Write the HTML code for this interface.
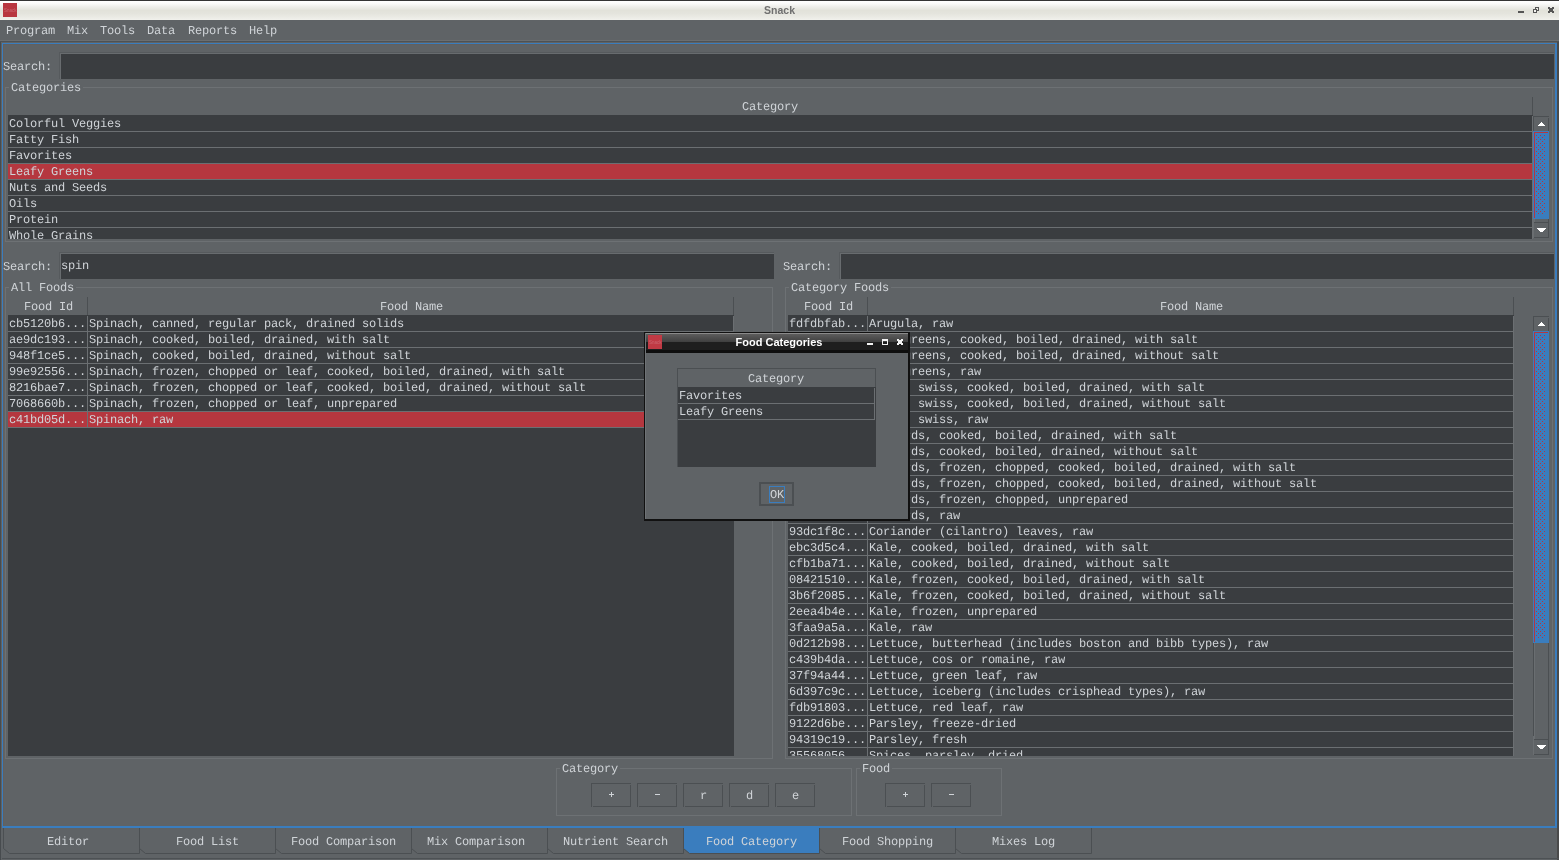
<!DOCTYPE html>
<html><head><meta charset="utf-8"><title>Snack</title>
<style>
html,body{margin:0;padding:0;background:#5f6366;overflow:hidden;}
#r{will-change:transform;position:absolute;left:0;top:0;width:1559px;height:860px;overflow:hidden;background:#5f6366;}
#r div,#r span,#r svg,#r i{position:absolute;display:block;}
.m{font-family:"Liberation Mono",monospace;font-size:12px;letter-spacing:-0.2px;line-height:16px;white-space:pre;text-rendering:geometricPrecision;}
.t{font-family:"Liberation Sans",sans-serif;font-weight:bold;font-size:11px;line-height:14px;white-space:pre;}
.ico{font-family:"Liberation Sans",sans-serif;font-size:4.5px;line-height:6px;color:#cb6670;white-space:pre;}
.clip{overflow:hidden;}
.dots i{width:1px;height:1px;background:#b5373f;}
</style></head>
<body><div id="r">
<div style="left:0;top:0;width:1559px;height:860px;background:#5f6366"></div>
<div style="left:0px;top:0px;width:1559px;height:1px;background:#343434;"></div>
<div style="left:0px;top:1px;width:1559px;height:19px;background:;background:linear-gradient(#ffffff 0%,#fbfbfa 12%,#eeeeea 30%,#e2e2da 50%,#e4e4dd 65%,#ebebe5 85%,#f1f1ec 100%)"></div>
<div style="left:3px;top:3px;width:14px;height:14px;background:#b8363f;"></div>
<span class="ico" style="left:4px;top:8px;">Snack</span>
<span class="t" style="left:0;top:3px;width:1559px;text-align:center;color:#707070;font-size:10.5px">Snack</span>
<div style="left:1518px;top:11px;width:6px;height:2px;background:#555555;"></div>
<div style="left:1535px;top:7px;width:4px;height:1px;background:#555555;"></div>
<div style="left:1538px;top:7px;width:1px;height:4px;background:#555555;"></div>
<div style="left:1535px;top:7px;width:1px;height:2px;background:#555555;"></div>
<div style="left:1537px;top:10px;width:2px;height:1px;background:#555555;"></div>
<div style="left:1533px;top:9px;width:4px;height:4px;background:#555555;"></div>
<div style="left:1534px;top:10px;width:2px;height:2px;background:#f4f4f0;"></div>
<svg style="left:1548px;top:7px" width="6" height="6" viewBox="0 0 6 6"><path d="M0 0h2v1h2V0h2v2H5v2h1v2H4V5H2v1H0V4h1V2H0z" fill="#555555"/></svg>
<div style="left:0px;top:20px;width:1559px;height:22px;background:#5f6366;"></div>
<div style="left:0px;top:40px;width:1559px;height:1px;background:#6a6e71;"></div>
<div style="left:0px;top:41px;width:1559px;height:1px;background:#4d5154;"></div>
<span class="m" style="left:6px;top:23px;color:#d0d4d8;">Program</span>
<span class="m" style="left:67px;top:23px;color:#d0d4d8;">Mix</span>
<span class="m" style="left:100px;top:23px;color:#d0d4d8;">Tools</span>
<span class="m" style="left:147px;top:23px;color:#d0d4d8;">Data</span>
<span class="m" style="left:188px;top:23px;color:#d0d4d8;">Reports</span>
<span class="m" style="left:249px;top:23px;color:#d0d4d8;">Help</span>
<div style="left:0px;top:42px;width:1px;height:818px;background:#474b4e;"></div>
<div style="left:1557px;top:42px;width:1px;height:818px;background:#4a4a4a;"></div>
<div style="left:1558px;top:42px;width:1px;height:818px;background:#4a4a4a;"></div>
<div style="left:2px;top:43px;width:1555px;height:1px;background:#3a7dbe;"></div>
<div style="left:2px;top:43px;width:1px;height:785px;background:#3a7dbe;"></div>
<div style="left:1555px;top:43px;width:2px;height:785px;background:#3a7dbe;"></div>
<div style="left:2px;top:826px;width:1555px;height:2px;background:#3a7dbe;"></div>
<div style="left:3px;top:44px;width:1px;height:782px;background:#62605f;"></div>
<div style="left:3px;top:44px;width:1552px;height:1px;background:#62605f;"></div>
<span class="m" style="left:3px;top:59px;color:#d0d4d8;">Search:</span>
<div style="left:59px;top:52px;width:1495px;height:27px;background:#565a5d;"></div>
<div style="left:60px;top:53px;width:1494px;height:26px;background:#686c6f;"></div>
<div style="left:61px;top:54px;width:1493px;height:25px;background:#3a3d40;"></div>
<div style="left:5px;top:87px;width:4px;height:1px;background:#6d7174;"></div>
<div style="left:83px;top:87px;width:1470px;height:1px;background:#6d7174;"></div>
<div style="left:5px;top:87px;width:1px;height:155px;background:#6d7174;"></div>
<div style="left:1552px;top:87px;width:1px;height:155px;background:#6d7174;"></div>
<div style="left:5px;top:241px;width:1548px;height:1px;background:#6d7174;"></div>
<span class="m" style="left:11px;top:80px;color:#d0d4d8;">Categories</span>
<div style="left:1532px;top:97px;width:1px;height:19px;background:#4b4f52;"></div>
<span class="m" style="left:742px;top:99px;color:#d0d4d8;">Category</span>
<div class="clip" style="left:8px;top:115px;width:1526px;height:124px;">
<div style="left:0;top:0;width:1525px;height:124px;background:#3a3d40"></div>
<div style="left:0;top:16px;width:1525px;height:1px;background:#6b6f72"></div>
<span class="m" style="left:1px;top:1px;color:#d0d4d8">Colorful Veggies</span>
<div style="left:0;top:32px;width:1525px;height:1px;background:#6b6f72"></div>
<span class="m" style="left:1px;top:17px;color:#d0d4d8">Fatty Fish</span>
<div style="left:0;top:48px;width:1525px;height:1px;background:#6b6f72"></div>
<span class="m" style="left:1px;top:33px;color:#d0d4d8">Favorites</span>
<div style="left:0;top:49px;width:1525px;height:15px;background:#b5373f"></div>
<div style="left:0;top:64px;width:1525px;height:1px;background:#6b6f72"></div>
<span class="m" style="left:1px;top:49px;color:#d0d4d8">Leafy Greens</span>
<div style="left:0;top:80px;width:1525px;height:1px;background:#6b6f72"></div>
<span class="m" style="left:1px;top:65px;color:#d0d4d8">Nuts and Seeds</span>
<div style="left:0;top:96px;width:1525px;height:1px;background:#6b6f72"></div>
<span class="m" style="left:1px;top:81px;color:#d0d4d8">Oils</span>
<div style="left:0;top:112px;width:1525px;height:1px;background:#6b6f72"></div>
<span class="m" style="left:1px;top:97px;color:#d0d4d8">Protein</span>
<div style="left:0;top:128px;width:1525px;height:1px;background:#6b6f72"></div>
<span class="m" style="left:1px;top:113px;color:#d0d4d8">Whole Grains</span>
<div style="left:1524px;top:1px;width:1px;height:124px;background:#6b6f72"></div>
</div>
<div style="left:1533px;top:116px;width:1px;height:122px;background:#4b4f52;"></div>
<div style="left:1534px;top:116px;width:1px;height:122px;background:#6a6e71;"></div>
<div style="left:1548px;top:116px;width:1px;height:122px;background:#4b4f52;"></div>
<div style="left:1533px;top:116px;width:16px;height:16px;background:#5f6366;"></div>
<div style="left:1533px;top:116px;width:16px;height:1px;background:#4b4f52;"></div>
<div style="left:1533px;top:116px;width:1px;height:15px;background:#4b4f52;"></div>
<div style="left:1548px;top:118px;width:1px;height:13px;background:#4b4f52;"></div>
<div style="left:1541px;top:122px;width:1px;height:1px;background:#ffffff;"></div>
<div style="left:1540px;top:123px;width:3px;height:1px;background:#ffffff;"></div>
<div style="left:1539px;top:124px;width:5px;height:1px;background:#ffffff;"></div>
<div style="left:1538px;top:125px;width:7px;height:1px;background:#ffffff;"></div>
<div style="left:1533px;top:131px;width:16px;height:88px;background:#3a7dbe;"></div>
<div style="left:1534px;top:132px;width:1px;height:86px;background:#b5373f;"></div>
<div style="left:1534px;top:132px;width:14px;height:1px;background:#b5373f;"></div>
<div class="dots"><i style="left:1536px;top:135px"></i><i style="left:1540px;top:135px"></i><i style="left:1544px;top:135px"></i><i style="left:1538px;top:137px"></i><i style="left:1542px;top:137px"></i><i style="left:1536px;top:139px"></i><i style="left:1540px;top:139px"></i><i style="left:1544px;top:139px"></i><i style="left:1538px;top:141px"></i><i style="left:1542px;top:141px"></i><i style="left:1536px;top:143px"></i><i style="left:1540px;top:143px"></i><i style="left:1544px;top:143px"></i><i style="left:1538px;top:145px"></i><i style="left:1542px;top:145px"></i><i style="left:1536px;top:147px"></i><i style="left:1540px;top:147px"></i><i style="left:1544px;top:147px"></i><i style="left:1538px;top:149px"></i><i style="left:1542px;top:149px"></i><i style="left:1536px;top:151px"></i><i style="left:1540px;top:151px"></i><i style="left:1544px;top:151px"></i><i style="left:1538px;top:153px"></i><i style="left:1542px;top:153px"></i><i style="left:1536px;top:155px"></i><i style="left:1540px;top:155px"></i><i style="left:1544px;top:155px"></i><i style="left:1538px;top:157px"></i><i style="left:1542px;top:157px"></i><i style="left:1536px;top:159px"></i><i style="left:1540px;top:159px"></i><i style="left:1544px;top:159px"></i><i style="left:1538px;top:161px"></i><i style="left:1542px;top:161px"></i><i style="left:1536px;top:163px"></i><i style="left:1540px;top:163px"></i><i style="left:1544px;top:163px"></i><i style="left:1538px;top:165px"></i><i style="left:1542px;top:165px"></i><i style="left:1536px;top:167px"></i><i style="left:1540px;top:167px"></i><i style="left:1544px;top:167px"></i><i style="left:1538px;top:169px"></i><i style="left:1542px;top:169px"></i><i style="left:1536px;top:171px"></i><i style="left:1540px;top:171px"></i><i style="left:1544px;top:171px"></i><i style="left:1538px;top:173px"></i><i style="left:1542px;top:173px"></i><i style="left:1536px;top:175px"></i><i style="left:1540px;top:175px"></i><i style="left:1544px;top:175px"></i><i style="left:1538px;top:177px"></i><i style="left:1542px;top:177px"></i><i style="left:1536px;top:179px"></i><i style="left:1540px;top:179px"></i><i style="left:1544px;top:179px"></i><i style="left:1538px;top:181px"></i><i style="left:1542px;top:181px"></i><i style="left:1536px;top:183px"></i><i style="left:1540px;top:183px"></i><i style="left:1544px;top:183px"></i><i style="left:1538px;top:185px"></i><i style="left:1542px;top:185px"></i><i style="left:1536px;top:187px"></i><i style="left:1540px;top:187px"></i><i style="left:1544px;top:187px"></i><i style="left:1538px;top:189px"></i><i style="left:1542px;top:189px"></i><i style="left:1536px;top:191px"></i><i style="left:1540px;top:191px"></i><i style="left:1544px;top:191px"></i><i style="left:1538px;top:193px"></i><i style="left:1542px;top:193px"></i><i style="left:1536px;top:195px"></i><i style="left:1540px;top:195px"></i><i style="left:1544px;top:195px"></i><i style="left:1538px;top:197px"></i><i style="left:1542px;top:197px"></i><i style="left:1536px;top:199px"></i><i style="left:1540px;top:199px"></i><i style="left:1544px;top:199px"></i><i style="left:1538px;top:201px"></i><i style="left:1542px;top:201px"></i><i style="left:1536px;top:203px"></i><i style="left:1540px;top:203px"></i><i style="left:1544px;top:203px"></i><i style="left:1538px;top:205px"></i><i style="left:1542px;top:205px"></i><i style="left:1536px;top:207px"></i><i style="left:1540px;top:207px"></i><i style="left:1544px;top:207px"></i><i style="left:1538px;top:209px"></i><i style="left:1542px;top:209px"></i><i style="left:1536px;top:211px"></i><i style="left:1540px;top:211px"></i><i style="left:1544px;top:211px"></i><i style="left:1538px;top:213px"></i><i style="left:1542px;top:213px"></i></div>
<div style="left:1533px;top:222px;width:16px;height:16px;background:#5f6366;"></div>
<div style="left:1534px;top:222px;width:15px;height:1px;background:#4b4f52;"></div>
<div style="left:1534px;top:237px;width:15px;height:1px;background:#4b4f52;"></div>
<div style="left:1548px;top:222px;width:1px;height:16px;background:#4b4f52;"></div>
<div style="left:1533px;top:219px;width:1px;height:19px;background:#6a6e71;"></div>
<div style="left:1537px;top:228px;width:9px;height:1px;background:#ffffff;"></div>
<div style="left:1538px;top:229px;width:7px;height:1px;background:#ffffff;"></div>
<div style="left:1539px;top:230px;width:5px;height:1px;background:#ffffff;"></div>
<div style="left:1540px;top:231px;width:3px;height:1px;background:#ffffff;"></div>
<span class="m" style="left:3px;top:259px;color:#d0d4d8;">Search:</span>
<div style="left:59px;top:252px;width:715px;height:27px;background:#565a5d;"></div>
<div style="left:60px;top:253px;width:714px;height:26px;background:#686c6f;"></div>
<div style="left:61px;top:254px;width:713px;height:25px;background:#3a3d40;"></div>
<span class="m" style="left:61px;top:258px;color:#d0d4d8;">spin</span>
<div style="left:5px;top:287px;width:4px;height:1px;background:#6d7174;"></div>
<div style="left:76px;top:287px;width:697px;height:1px;background:#6d7174;"></div>
<div style="left:5px;top:287px;width:1px;height:472px;background:#6d7174;"></div>
<div style="left:772px;top:287px;width:1px;height:472px;background:#6d7174;"></div>
<div style="left:5px;top:758px;width:768px;height:1px;background:#6d7174;"></div>
<span class="m" style="left:11px;top:280px;color:#d0d4d8;">All Foods</span>
<div style="left:87px;top:297px;width:1px;height:19px;background:#4b4f52;"></div>
<span class="m" style="left:24px;top:299px;color:#d0d4d8;">Food Id</span>
<div style="left:733px;top:297px;width:1px;height:19px;background:#4b4f52;"></div>
<span class="m" style="left:380px;top:299px;color:#d0d4d8;">Food Name</span>
<div class="clip" style="left:8px;top:315px;width:727px;height:441px;">
<div style="left:0;top:0;width:726px;height:441px;background:#3a3d40"></div>
<div style="left:0;top:16px;width:726px;height:1px;background:#6b6f72"></div>
<span class="m" style="left:1px;top:1px;color:#d0d4d8">cb5120b6...</span>
<span class="m" style="left:81px;top:1px;color:#d0d4d8">Spinach, canned, regular pack, drained solids</span>
<div style="left:0;top:32px;width:726px;height:1px;background:#6b6f72"></div>
<span class="m" style="left:1px;top:17px;color:#d0d4d8">ae9dc193...</span>
<span class="m" style="left:81px;top:17px;color:#d0d4d8">Spinach, cooked, boiled, drained, with salt</span>
<div style="left:0;top:48px;width:726px;height:1px;background:#6b6f72"></div>
<span class="m" style="left:1px;top:33px;color:#d0d4d8">948f1ce5...</span>
<span class="m" style="left:81px;top:33px;color:#d0d4d8">Spinach, cooked, boiled, drained, without salt</span>
<div style="left:0;top:64px;width:726px;height:1px;background:#6b6f72"></div>
<span class="m" style="left:1px;top:49px;color:#d0d4d8">99e92556...</span>
<span class="m" style="left:81px;top:49px;color:#d0d4d8">Spinach, frozen, chopped or leaf, cooked, boiled, drained, with salt</span>
<div style="left:0;top:80px;width:726px;height:1px;background:#6b6f72"></div>
<span class="m" style="left:1px;top:65px;color:#d0d4d8">8216bae7...</span>
<span class="m" style="left:81px;top:65px;color:#d0d4d8">Spinach, frozen, chopped or leaf, cooked, boiled, drained, without salt</span>
<div style="left:0;top:96px;width:726px;height:1px;background:#6b6f72"></div>
<span class="m" style="left:1px;top:81px;color:#d0d4d8">7068660b...</span>
<span class="m" style="left:81px;top:81px;color:#d0d4d8">Spinach, frozen, chopped or leaf, unprepared</span>
<div style="left:0;top:97px;width:726px;height:15px;background:#b5373f"></div>
<div style="left:0;top:112px;width:726px;height:1px;background:#6b6f72"></div>
<span class="m" style="left:1px;top:97px;color:#d0d4d8">c41bd05d...</span>
<span class="m" style="left:81px;top:97px;color:#d0d4d8">Spinach, raw</span>
<div style="left:79px;top:1px;width:1px;height:112px;background:#6b6f72"></div>
<div style="left:725px;top:1px;width:1px;height:112px;background:#6b6f72"></div>
</div>
<span class="m" style="left:783px;top:259px;color:#d0d4d8;">Search:</span>
<div style="left:839px;top:252px;width:715px;height:27px;background:#565a5d;"></div>
<div style="left:840px;top:253px;width:714px;height:26px;background:#686c6f;"></div>
<div style="left:841px;top:254px;width:713px;height:25px;background:#3a3d40;"></div>
<div style="left:785px;top:287px;width:4px;height:1px;background:#6d7174;"></div>
<div style="left:891px;top:287px;width:662px;height:1px;background:#6d7174;"></div>
<div style="left:785px;top:287px;width:1px;height:472px;background:#6d7174;"></div>
<div style="left:1552px;top:287px;width:1px;height:472px;background:#6d7174;"></div>
<div style="left:785px;top:758px;width:768px;height:1px;background:#6d7174;"></div>
<span class="m" style="left:791px;top:280px;color:#d0d4d8;">Category Foods</span>
<div style="left:867px;top:297px;width:1px;height:19px;background:#4b4f52;"></div>
<span class="m" style="left:804px;top:299px;color:#d0d4d8;">Food Id</span>
<div style="left:1513px;top:297px;width:1px;height:19px;background:#4b4f52;"></div>
<span class="m" style="left:1160px;top:299px;color:#d0d4d8;">Food Name</span>
<div class="clip" style="left:788px;top:315px;width:727px;height:441px;">
<div style="left:0;top:0;width:726px;height:441px;background:#3a3d40"></div>
<div style="left:0;top:16px;width:726px;height:1px;background:#6b6f72"></div>
<span class="m" style="left:1px;top:1px;color:#d0d4d8">fdfdbfab...</span>
<span class="m" style="left:81px;top:1px;color:#d0d4d8">Arugula, raw</span>
<div style="left:0;top:32px;width:726px;height:1px;background:#6b6f72"></div>
<span class="m" style="left:1px;top:17px;color:#d0d4d8">1b5e7d02...</span>
<span class="m" style="left:81px;top:17px;color:#d0d4d8">Beet greens, cooked, boiled, drained, with salt</span>
<div style="left:0;top:48px;width:726px;height:1px;background:#6b6f72"></div>
<span class="m" style="left:1px;top:33px;color:#d0d4d8">a90c44e1...</span>
<span class="m" style="left:81px;top:33px;color:#d0d4d8">Beet greens, cooked, boiled, drained, without salt</span>
<div style="left:0;top:64px;width:726px;height:1px;background:#6b6f72"></div>
<span class="m" style="left:1px;top:49px;color:#d0d4d8">5c2f81b7...</span>
<span class="m" style="left:81px;top:49px;color:#d0d4d8">Beet greens, raw</span>
<div style="left:0;top:80px;width:726px;height:1px;background:#6b6f72"></div>
<span class="m" style="left:1px;top:65px;color:#d0d4d8">e07a3d96...</span>
<span class="m" style="left:81px;top:65px;color:#d0d4d8">Chard, swiss, cooked, boiled, drained, with salt</span>
<div style="left:0;top:96px;width:726px;height:1px;background:#6b6f72"></div>
<span class="m" style="left:1px;top:81px;color:#d0d4d8">4d81c6f3...</span>
<span class="m" style="left:81px;top:81px;color:#d0d4d8">Chard, swiss, cooked, boiled, drained, without salt</span>
<div style="left:0;top:112px;width:726px;height:1px;background:#6b6f72"></div>
<span class="m" style="left:1px;top:97px;color:#d0d4d8">b3f05a28...</span>
<span class="m" style="left:81px;top:97px;color:#d0d4d8">Chard, swiss, raw</span>
<div style="left:0;top:128px;width:726px;height:1px;background:#6b6f72"></div>
<span class="m" style="left:1px;top:113px;color:#d0d4d8">27c9e4d1...</span>
<span class="m" style="left:81px;top:113px;color:#d0d4d8">Collards, cooked, boiled, drained, with salt</span>
<div style="left:0;top:144px;width:726px;height:1px;background:#6b6f72"></div>
<span class="m" style="left:1px;top:129px;color:#d0d4d8">8a16f0b5...</span>
<span class="m" style="left:81px;top:129px;color:#d0d4d8">Collards, cooked, boiled, drained, without salt</span>
<div style="left:0;top:160px;width:726px;height:1px;background:#6b6f72"></div>
<span class="m" style="left:1px;top:145px;color:#d0d4d8">d4b27e39...</span>
<span class="m" style="left:81px;top:145px;color:#d0d4d8">Collards, frozen, chopped, cooked, boiled, drained, with salt</span>
<div style="left:0;top:176px;width:726px;height:1px;background:#6b6f72"></div>
<span class="m" style="left:1px;top:161px;color:#d0d4d8">61e8a5c0...</span>
<span class="m" style="left:81px;top:161px;color:#d0d4d8">Collards, frozen, chopped, cooked, boiled, drained, without salt</span>
<div style="left:0;top:192px;width:726px;height:1px;background:#6b6f72"></div>
<span class="m" style="left:1px;top:177px;color:#d0d4d8">f92d03b4...</span>
<span class="m" style="left:81px;top:177px;color:#d0d4d8">Collards, frozen, chopped, unprepared</span>
<div style="left:0;top:208px;width:726px;height:1px;background:#6b6f72"></div>
<span class="m" style="left:1px;top:193px;color:#d0d4d8">0c75b1e8...</span>
<span class="m" style="left:81px;top:193px;color:#d0d4d8">Collards, raw</span>
<div style="left:0;top:224px;width:726px;height:1px;background:#6b6f72"></div>
<span class="m" style="left:1px;top:209px;color:#d0d4d8">93dc1f8c...</span>
<span class="m" style="left:81px;top:209px;color:#d0d4d8">Coriander (cilantro) leaves, raw</span>
<div style="left:0;top:240px;width:726px;height:1px;background:#6b6f72"></div>
<span class="m" style="left:1px;top:225px;color:#d0d4d8">ebc3d5c4...</span>
<span class="m" style="left:81px;top:225px;color:#d0d4d8">Kale, cooked, boiled, drained, with salt</span>
<div style="left:0;top:256px;width:726px;height:1px;background:#6b6f72"></div>
<span class="m" style="left:1px;top:241px;color:#d0d4d8">cfb1ba71...</span>
<span class="m" style="left:81px;top:241px;color:#d0d4d8">Kale, cooked, boiled, drained, without salt</span>
<div style="left:0;top:272px;width:726px;height:1px;background:#6b6f72"></div>
<span class="m" style="left:1px;top:257px;color:#d0d4d8">08421510...</span>
<span class="m" style="left:81px;top:257px;color:#d0d4d8">Kale, frozen, cooked, boiled, drained, with salt</span>
<div style="left:0;top:288px;width:726px;height:1px;background:#6b6f72"></div>
<span class="m" style="left:1px;top:273px;color:#d0d4d8">3b6f2085...</span>
<span class="m" style="left:81px;top:273px;color:#d0d4d8">Kale, frozen, cooked, boiled, drained, without salt</span>
<div style="left:0;top:304px;width:726px;height:1px;background:#6b6f72"></div>
<span class="m" style="left:1px;top:289px;color:#d0d4d8">2eea4b4e...</span>
<span class="m" style="left:81px;top:289px;color:#d0d4d8">Kale, frozen, unprepared</span>
<div style="left:0;top:320px;width:726px;height:1px;background:#6b6f72"></div>
<span class="m" style="left:1px;top:305px;color:#d0d4d8">3faa9a5a...</span>
<span class="m" style="left:81px;top:305px;color:#d0d4d8">Kale, raw</span>
<div style="left:0;top:336px;width:726px;height:1px;background:#6b6f72"></div>
<span class="m" style="left:1px;top:321px;color:#d0d4d8">0d212b98...</span>
<span class="m" style="left:81px;top:321px;color:#d0d4d8">Lettuce, butterhead (includes boston and bibb types), raw</span>
<div style="left:0;top:352px;width:726px;height:1px;background:#6b6f72"></div>
<span class="m" style="left:1px;top:337px;color:#d0d4d8">c439b4da...</span>
<span class="m" style="left:81px;top:337px;color:#d0d4d8">Lettuce, cos or romaine, raw</span>
<div style="left:0;top:368px;width:726px;height:1px;background:#6b6f72"></div>
<span class="m" style="left:1px;top:353px;color:#d0d4d8">37f94a44...</span>
<span class="m" style="left:81px;top:353px;color:#d0d4d8">Lettuce, green leaf, raw</span>
<div style="left:0;top:384px;width:726px;height:1px;background:#6b6f72"></div>
<span class="m" style="left:1px;top:369px;color:#d0d4d8">6d397c9c...</span>
<span class="m" style="left:81px;top:369px;color:#d0d4d8">Lettuce, iceberg (includes crisphead types), raw</span>
<div style="left:0;top:400px;width:726px;height:1px;background:#6b6f72"></div>
<span class="m" style="left:1px;top:385px;color:#d0d4d8">fdb91803...</span>
<span class="m" style="left:81px;top:385px;color:#d0d4d8">Lettuce, red leaf, raw</span>
<div style="left:0;top:416px;width:726px;height:1px;background:#6b6f72"></div>
<span class="m" style="left:1px;top:401px;color:#d0d4d8">9122d6be...</span>
<span class="m" style="left:81px;top:401px;color:#d0d4d8">Parsley, freeze-dried</span>
<div style="left:0;top:432px;width:726px;height:1px;background:#6b6f72"></div>
<span class="m" style="left:1px;top:417px;color:#d0d4d8">94319c19...</span>
<span class="m" style="left:81px;top:417px;color:#d0d4d8">Parsley, fresh</span>
<div style="left:0;top:448px;width:726px;height:1px;background:#6b6f72"></div>
<span class="m" style="left:1px;top:433px;color:#d0d4d8">35568056...</span>
<span class="m" style="left:81px;top:433px;color:#d0d4d8">Spices, parsley, dried</span>
<div style="left:79px;top:1px;width:1px;height:441px;background:#6b6f72"></div>
<div style="left:725px;top:1px;width:1px;height:441px;background:#6b6f72"></div>
</div>
<div style="left:1533px;top:316px;width:1px;height:439px;background:#4b4f52;"></div>
<div style="left:1534px;top:316px;width:1px;height:439px;background:#6a6e71;"></div>
<div style="left:1548px;top:316px;width:1px;height:439px;background:#4b4f52;"></div>
<div style="left:1533px;top:316px;width:16px;height:16px;background:#5f6366;"></div>
<div style="left:1533px;top:316px;width:16px;height:1px;background:#4b4f52;"></div>
<div style="left:1533px;top:316px;width:1px;height:15px;background:#4b4f52;"></div>
<div style="left:1548px;top:318px;width:1px;height:13px;background:#4b4f52;"></div>
<div style="left:1541px;top:322px;width:1px;height:1px;background:#ffffff;"></div>
<div style="left:1540px;top:323px;width:3px;height:1px;background:#ffffff;"></div>
<div style="left:1539px;top:324px;width:5px;height:1px;background:#ffffff;"></div>
<div style="left:1538px;top:325px;width:7px;height:1px;background:#ffffff;"></div>
<div style="left:1533px;top:331px;width:16px;height:312px;background:#3a7dbe;"></div>
<div style="left:1534px;top:332px;width:1px;height:310px;background:#b5373f;"></div>
<div style="left:1534px;top:332px;width:14px;height:1px;background:#b5373f;"></div>
<div class="dots"><i style="left:1536px;top:335px"></i><i style="left:1540px;top:335px"></i><i style="left:1544px;top:335px"></i><i style="left:1538px;top:337px"></i><i style="left:1542px;top:337px"></i><i style="left:1536px;top:339px"></i><i style="left:1540px;top:339px"></i><i style="left:1544px;top:339px"></i><i style="left:1538px;top:341px"></i><i style="left:1542px;top:341px"></i><i style="left:1536px;top:343px"></i><i style="left:1540px;top:343px"></i><i style="left:1544px;top:343px"></i><i style="left:1538px;top:345px"></i><i style="left:1542px;top:345px"></i><i style="left:1536px;top:347px"></i><i style="left:1540px;top:347px"></i><i style="left:1544px;top:347px"></i><i style="left:1538px;top:349px"></i><i style="left:1542px;top:349px"></i><i style="left:1536px;top:351px"></i><i style="left:1540px;top:351px"></i><i style="left:1544px;top:351px"></i><i style="left:1538px;top:353px"></i><i style="left:1542px;top:353px"></i><i style="left:1536px;top:355px"></i><i style="left:1540px;top:355px"></i><i style="left:1544px;top:355px"></i><i style="left:1538px;top:357px"></i><i style="left:1542px;top:357px"></i><i style="left:1536px;top:359px"></i><i style="left:1540px;top:359px"></i><i style="left:1544px;top:359px"></i><i style="left:1538px;top:361px"></i><i style="left:1542px;top:361px"></i><i style="left:1536px;top:363px"></i><i style="left:1540px;top:363px"></i><i style="left:1544px;top:363px"></i><i style="left:1538px;top:365px"></i><i style="left:1542px;top:365px"></i><i style="left:1536px;top:367px"></i><i style="left:1540px;top:367px"></i><i style="left:1544px;top:367px"></i><i style="left:1538px;top:369px"></i><i style="left:1542px;top:369px"></i><i style="left:1536px;top:371px"></i><i style="left:1540px;top:371px"></i><i style="left:1544px;top:371px"></i><i style="left:1538px;top:373px"></i><i style="left:1542px;top:373px"></i><i style="left:1536px;top:375px"></i><i style="left:1540px;top:375px"></i><i style="left:1544px;top:375px"></i><i style="left:1538px;top:377px"></i><i style="left:1542px;top:377px"></i><i style="left:1536px;top:379px"></i><i style="left:1540px;top:379px"></i><i style="left:1544px;top:379px"></i><i style="left:1538px;top:381px"></i><i style="left:1542px;top:381px"></i><i style="left:1536px;top:383px"></i><i style="left:1540px;top:383px"></i><i style="left:1544px;top:383px"></i><i style="left:1538px;top:385px"></i><i style="left:1542px;top:385px"></i><i style="left:1536px;top:387px"></i><i style="left:1540px;top:387px"></i><i style="left:1544px;top:387px"></i><i style="left:1538px;top:389px"></i><i style="left:1542px;top:389px"></i><i style="left:1536px;top:391px"></i><i style="left:1540px;top:391px"></i><i style="left:1544px;top:391px"></i><i style="left:1538px;top:393px"></i><i style="left:1542px;top:393px"></i><i style="left:1536px;top:395px"></i><i style="left:1540px;top:395px"></i><i style="left:1544px;top:395px"></i><i style="left:1538px;top:397px"></i><i style="left:1542px;top:397px"></i><i style="left:1536px;top:399px"></i><i style="left:1540px;top:399px"></i><i style="left:1544px;top:399px"></i><i style="left:1538px;top:401px"></i><i style="left:1542px;top:401px"></i><i style="left:1536px;top:403px"></i><i style="left:1540px;top:403px"></i><i style="left:1544px;top:403px"></i><i style="left:1538px;top:405px"></i><i style="left:1542px;top:405px"></i><i style="left:1536px;top:407px"></i><i style="left:1540px;top:407px"></i><i style="left:1544px;top:407px"></i><i style="left:1538px;top:409px"></i><i style="left:1542px;top:409px"></i><i style="left:1536px;top:411px"></i><i style="left:1540px;top:411px"></i><i style="left:1544px;top:411px"></i><i style="left:1538px;top:413px"></i><i style="left:1542px;top:413px"></i><i style="left:1536px;top:415px"></i><i style="left:1540px;top:415px"></i><i style="left:1544px;top:415px"></i><i style="left:1538px;top:417px"></i><i style="left:1542px;top:417px"></i><i style="left:1536px;top:419px"></i><i style="left:1540px;top:419px"></i><i style="left:1544px;top:419px"></i><i style="left:1538px;top:421px"></i><i style="left:1542px;top:421px"></i><i style="left:1536px;top:423px"></i><i style="left:1540px;top:423px"></i><i style="left:1544px;top:423px"></i><i style="left:1538px;top:425px"></i><i style="left:1542px;top:425px"></i><i style="left:1536px;top:427px"></i><i style="left:1540px;top:427px"></i><i style="left:1544px;top:427px"></i><i style="left:1538px;top:429px"></i><i style="left:1542px;top:429px"></i><i style="left:1536px;top:431px"></i><i style="left:1540px;top:431px"></i><i style="left:1544px;top:431px"></i><i style="left:1538px;top:433px"></i><i style="left:1542px;top:433px"></i><i style="left:1536px;top:435px"></i><i style="left:1540px;top:435px"></i><i style="left:1544px;top:435px"></i><i style="left:1538px;top:437px"></i><i style="left:1542px;top:437px"></i><i style="left:1536px;top:439px"></i><i style="left:1540px;top:439px"></i><i style="left:1544px;top:439px"></i><i style="left:1538px;top:441px"></i><i style="left:1542px;top:441px"></i><i style="left:1536px;top:443px"></i><i style="left:1540px;top:443px"></i><i style="left:1544px;top:443px"></i><i style="left:1538px;top:445px"></i><i style="left:1542px;top:445px"></i><i style="left:1536px;top:447px"></i><i style="left:1540px;top:447px"></i><i style="left:1544px;top:447px"></i><i style="left:1538px;top:449px"></i><i style="left:1542px;top:449px"></i><i style="left:1536px;top:451px"></i><i style="left:1540px;top:451px"></i><i style="left:1544px;top:451px"></i><i style="left:1538px;top:453px"></i><i style="left:1542px;top:453px"></i><i style="left:1536px;top:455px"></i><i style="left:1540px;top:455px"></i><i style="left:1544px;top:455px"></i><i style="left:1538px;top:457px"></i><i style="left:1542px;top:457px"></i><i style="left:1536px;top:459px"></i><i style="left:1540px;top:459px"></i><i style="left:1544px;top:459px"></i><i style="left:1538px;top:461px"></i><i style="left:1542px;top:461px"></i><i style="left:1536px;top:463px"></i><i style="left:1540px;top:463px"></i><i style="left:1544px;top:463px"></i><i style="left:1538px;top:465px"></i><i style="left:1542px;top:465px"></i><i style="left:1536px;top:467px"></i><i style="left:1540px;top:467px"></i><i style="left:1544px;top:467px"></i><i style="left:1538px;top:469px"></i><i style="left:1542px;top:469px"></i><i style="left:1536px;top:471px"></i><i style="left:1540px;top:471px"></i><i style="left:1544px;top:471px"></i><i style="left:1538px;top:473px"></i><i style="left:1542px;top:473px"></i><i style="left:1536px;top:475px"></i><i style="left:1540px;top:475px"></i><i style="left:1544px;top:475px"></i><i style="left:1538px;top:477px"></i><i style="left:1542px;top:477px"></i><i style="left:1536px;top:479px"></i><i style="left:1540px;top:479px"></i><i style="left:1544px;top:479px"></i><i style="left:1538px;top:481px"></i><i style="left:1542px;top:481px"></i><i style="left:1536px;top:483px"></i><i style="left:1540px;top:483px"></i><i style="left:1544px;top:483px"></i><i style="left:1538px;top:485px"></i><i style="left:1542px;top:485px"></i><i style="left:1536px;top:487px"></i><i style="left:1540px;top:487px"></i><i style="left:1544px;top:487px"></i><i style="left:1538px;top:489px"></i><i style="left:1542px;top:489px"></i><i style="left:1536px;top:491px"></i><i style="left:1540px;top:491px"></i><i style="left:1544px;top:491px"></i><i style="left:1538px;top:493px"></i><i style="left:1542px;top:493px"></i><i style="left:1536px;top:495px"></i><i style="left:1540px;top:495px"></i><i style="left:1544px;top:495px"></i><i style="left:1538px;top:497px"></i><i style="left:1542px;top:497px"></i><i style="left:1536px;top:499px"></i><i style="left:1540px;top:499px"></i><i style="left:1544px;top:499px"></i><i style="left:1538px;top:501px"></i><i style="left:1542px;top:501px"></i><i style="left:1536px;top:503px"></i><i style="left:1540px;top:503px"></i><i style="left:1544px;top:503px"></i><i style="left:1538px;top:505px"></i><i style="left:1542px;top:505px"></i><i style="left:1536px;top:507px"></i><i style="left:1540px;top:507px"></i><i style="left:1544px;top:507px"></i><i style="left:1538px;top:509px"></i><i style="left:1542px;top:509px"></i><i style="left:1536px;top:511px"></i><i style="left:1540px;top:511px"></i><i style="left:1544px;top:511px"></i><i style="left:1538px;top:513px"></i><i style="left:1542px;top:513px"></i><i style="left:1536px;top:515px"></i><i style="left:1540px;top:515px"></i><i style="left:1544px;top:515px"></i><i style="left:1538px;top:517px"></i><i style="left:1542px;top:517px"></i><i style="left:1536px;top:519px"></i><i style="left:1540px;top:519px"></i><i style="left:1544px;top:519px"></i><i style="left:1538px;top:521px"></i><i style="left:1542px;top:521px"></i><i style="left:1536px;top:523px"></i><i style="left:1540px;top:523px"></i><i style="left:1544px;top:523px"></i><i style="left:1538px;top:525px"></i><i style="left:1542px;top:525px"></i><i style="left:1536px;top:527px"></i><i style="left:1540px;top:527px"></i><i style="left:1544px;top:527px"></i><i style="left:1538px;top:529px"></i><i style="left:1542px;top:529px"></i><i style="left:1536px;top:531px"></i><i style="left:1540px;top:531px"></i><i style="left:1544px;top:531px"></i><i style="left:1538px;top:533px"></i><i style="left:1542px;top:533px"></i><i style="left:1536px;top:535px"></i><i style="left:1540px;top:535px"></i><i style="left:1544px;top:535px"></i><i style="left:1538px;top:537px"></i><i style="left:1542px;top:537px"></i><i style="left:1536px;top:539px"></i><i style="left:1540px;top:539px"></i><i style="left:1544px;top:539px"></i><i style="left:1538px;top:541px"></i><i style="left:1542px;top:541px"></i><i style="left:1536px;top:543px"></i><i style="left:1540px;top:543px"></i><i style="left:1544px;top:543px"></i><i style="left:1538px;top:545px"></i><i style="left:1542px;top:545px"></i><i style="left:1536px;top:547px"></i><i style="left:1540px;top:547px"></i><i style="left:1544px;top:547px"></i><i style="left:1538px;top:549px"></i><i style="left:1542px;top:549px"></i><i style="left:1536px;top:551px"></i><i style="left:1540px;top:551px"></i><i style="left:1544px;top:551px"></i><i style="left:1538px;top:553px"></i><i style="left:1542px;top:553px"></i><i style="left:1536px;top:555px"></i><i style="left:1540px;top:555px"></i><i style="left:1544px;top:555px"></i><i style="left:1538px;top:557px"></i><i style="left:1542px;top:557px"></i><i style="left:1536px;top:559px"></i><i style="left:1540px;top:559px"></i><i style="left:1544px;top:559px"></i><i style="left:1538px;top:561px"></i><i style="left:1542px;top:561px"></i><i style="left:1536px;top:563px"></i><i style="left:1540px;top:563px"></i><i style="left:1544px;top:563px"></i><i style="left:1538px;top:565px"></i><i style="left:1542px;top:565px"></i><i style="left:1536px;top:567px"></i><i style="left:1540px;top:567px"></i><i style="left:1544px;top:567px"></i><i style="left:1538px;top:569px"></i><i style="left:1542px;top:569px"></i><i style="left:1536px;top:571px"></i><i style="left:1540px;top:571px"></i><i style="left:1544px;top:571px"></i><i style="left:1538px;top:573px"></i><i style="left:1542px;top:573px"></i><i style="left:1536px;top:575px"></i><i style="left:1540px;top:575px"></i><i style="left:1544px;top:575px"></i><i style="left:1538px;top:577px"></i><i style="left:1542px;top:577px"></i><i style="left:1536px;top:579px"></i><i style="left:1540px;top:579px"></i><i style="left:1544px;top:579px"></i><i style="left:1538px;top:581px"></i><i style="left:1542px;top:581px"></i><i style="left:1536px;top:583px"></i><i style="left:1540px;top:583px"></i><i style="left:1544px;top:583px"></i><i style="left:1538px;top:585px"></i><i style="left:1542px;top:585px"></i><i style="left:1536px;top:587px"></i><i style="left:1540px;top:587px"></i><i style="left:1544px;top:587px"></i><i style="left:1538px;top:589px"></i><i style="left:1542px;top:589px"></i><i style="left:1536px;top:591px"></i><i style="left:1540px;top:591px"></i><i style="left:1544px;top:591px"></i><i style="left:1538px;top:593px"></i><i style="left:1542px;top:593px"></i><i style="left:1536px;top:595px"></i><i style="left:1540px;top:595px"></i><i style="left:1544px;top:595px"></i><i style="left:1538px;top:597px"></i><i style="left:1542px;top:597px"></i><i style="left:1536px;top:599px"></i><i style="left:1540px;top:599px"></i><i style="left:1544px;top:599px"></i><i style="left:1538px;top:601px"></i><i style="left:1542px;top:601px"></i><i style="left:1536px;top:603px"></i><i style="left:1540px;top:603px"></i><i style="left:1544px;top:603px"></i><i style="left:1538px;top:605px"></i><i style="left:1542px;top:605px"></i><i style="left:1536px;top:607px"></i><i style="left:1540px;top:607px"></i><i style="left:1544px;top:607px"></i><i style="left:1538px;top:609px"></i><i style="left:1542px;top:609px"></i><i style="left:1536px;top:611px"></i><i style="left:1540px;top:611px"></i><i style="left:1544px;top:611px"></i><i style="left:1538px;top:613px"></i><i style="left:1542px;top:613px"></i><i style="left:1536px;top:615px"></i><i style="left:1540px;top:615px"></i><i style="left:1544px;top:615px"></i><i style="left:1538px;top:617px"></i><i style="left:1542px;top:617px"></i><i style="left:1536px;top:619px"></i><i style="left:1540px;top:619px"></i><i style="left:1544px;top:619px"></i><i style="left:1538px;top:621px"></i><i style="left:1542px;top:621px"></i><i style="left:1536px;top:623px"></i><i style="left:1540px;top:623px"></i><i style="left:1544px;top:623px"></i><i style="left:1538px;top:625px"></i><i style="left:1542px;top:625px"></i><i style="left:1536px;top:627px"></i><i style="left:1540px;top:627px"></i><i style="left:1544px;top:627px"></i><i style="left:1538px;top:629px"></i><i style="left:1542px;top:629px"></i><i style="left:1536px;top:631px"></i><i style="left:1540px;top:631px"></i><i style="left:1544px;top:631px"></i><i style="left:1538px;top:633px"></i><i style="left:1542px;top:633px"></i><i style="left:1536px;top:635px"></i><i style="left:1540px;top:635px"></i><i style="left:1544px;top:635px"></i><i style="left:1538px;top:637px"></i><i style="left:1542px;top:637px"></i></div>
<div style="left:1533px;top:739px;width:16px;height:16px;background:#5f6366;"></div>
<div style="left:1534px;top:739px;width:15px;height:1px;background:#4b4f52;"></div>
<div style="left:1534px;top:754px;width:15px;height:1px;background:#4b4f52;"></div>
<div style="left:1548px;top:739px;width:1px;height:16px;background:#4b4f52;"></div>
<div style="left:1533px;top:736px;width:1px;height:19px;background:#6a6e71;"></div>
<div style="left:1537px;top:745px;width:9px;height:1px;background:#ffffff;"></div>
<div style="left:1538px;top:746px;width:7px;height:1px;background:#ffffff;"></div>
<div style="left:1539px;top:747px;width:5px;height:1px;background:#ffffff;"></div>
<div style="left:1540px;top:748px;width:3px;height:1px;background:#ffffff;"></div>
<div style="left:556px;top:768px;width:4px;height:1px;background:#6d7174;"></div>
<div style="left:620px;top:768px;width:232px;height:1px;background:#6d7174;"></div>
<div style="left:556px;top:768px;width:1px;height:48px;background:#6d7174;"></div>
<div style="left:851px;top:768px;width:1px;height:48px;background:#6d7174;"></div>
<div style="left:556px;top:815px;width:296px;height:1px;background:#6d7174;"></div>
<span class="m" style="left:562px;top:761px;color:#d0d4d8;">Category</span>
<div style="left:591px;top:783px;width:40px;height:1px;background:#4b4f52;"></div>
<div style="left:591px;top:783px;width:1px;height:24px;background:#4b4f52;"></div>
<div style="left:593px;top:806px;width:38px;height:1px;background:#4b4f52;"></div>
<div style="left:630px;top:785px;width:1px;height:22px;background:#4b4f52;"></div>
<div style="left:609px;top:794px;width:5px;height:1px;background:#d0d4d8;"></div>
<div style="left:611px;top:792px;width:1px;height:5px;background:#d0d4d8;"></div>
<div style="left:637px;top:783px;width:40px;height:1px;background:#4b4f52;"></div>
<div style="left:637px;top:783px;width:1px;height:24px;background:#4b4f52;"></div>
<div style="left:639px;top:806px;width:38px;height:1px;background:#4b4f52;"></div>
<div style="left:676px;top:785px;width:1px;height:22px;background:#4b4f52;"></div>
<div style="left:655px;top:794px;width:5px;height:1px;background:#d0d4d8;"></div>
<div style="left:683px;top:783px;width:40px;height:1px;background:#4b4f52;"></div>
<div style="left:683px;top:783px;width:1px;height:24px;background:#4b4f52;"></div>
<div style="left:685px;top:806px;width:38px;height:1px;background:#4b4f52;"></div>
<div style="left:722px;top:785px;width:1px;height:22px;background:#4b4f52;"></div>
<span class="m" style="left:700px;top:788px;color:#d0d4d8;">r</span>
<div style="left:729px;top:783px;width:40px;height:1px;background:#4b4f52;"></div>
<div style="left:729px;top:783px;width:1px;height:24px;background:#4b4f52;"></div>
<div style="left:731px;top:806px;width:38px;height:1px;background:#4b4f52;"></div>
<div style="left:768px;top:785px;width:1px;height:22px;background:#4b4f52;"></div>
<span class="m" style="left:746px;top:788px;color:#d0d4d8;">d</span>
<div style="left:775px;top:783px;width:40px;height:1px;background:#4b4f52;"></div>
<div style="left:775px;top:783px;width:1px;height:24px;background:#4b4f52;"></div>
<div style="left:777px;top:806px;width:38px;height:1px;background:#4b4f52;"></div>
<div style="left:814px;top:785px;width:1px;height:22px;background:#4b4f52;"></div>
<span class="m" style="left:792px;top:788px;color:#d0d4d8;">e</span>
<div style="left:856px;top:768px;width:4px;height:1px;background:#6d7174;"></div>
<div style="left:892px;top:768px;width:110px;height:1px;background:#6d7174;"></div>
<div style="left:856px;top:768px;width:1px;height:48px;background:#6d7174;"></div>
<div style="left:1001px;top:768px;width:1px;height:48px;background:#6d7174;"></div>
<div style="left:856px;top:815px;width:146px;height:1px;background:#6d7174;"></div>
<span class="m" style="left:862px;top:761px;color:#d0d4d8;">Food</span>
<div style="left:885px;top:783px;width:40px;height:1px;background:#4b4f52;"></div>
<div style="left:885px;top:783px;width:1px;height:24px;background:#4b4f52;"></div>
<div style="left:887px;top:806px;width:38px;height:1px;background:#4b4f52;"></div>
<div style="left:924px;top:785px;width:1px;height:22px;background:#4b4f52;"></div>
<div style="left:903px;top:794px;width:5px;height:1px;background:#d0d4d8;"></div>
<div style="left:905px;top:792px;width:1px;height:5px;background:#d0d4d8;"></div>
<div style="left:931px;top:783px;width:40px;height:1px;background:#4b4f52;"></div>
<div style="left:931px;top:783px;width:1px;height:24px;background:#4b4f52;"></div>
<div style="left:933px;top:806px;width:38px;height:1px;background:#4b4f52;"></div>
<div style="left:970px;top:785px;width:1px;height:22px;background:#4b4f52;"></div>
<div style="left:949px;top:794px;width:5px;height:1px;background:#d0d4d8;"></div>
<svg style="left:3px;top:828px" width="137" height="27" viewBox="0 0 137 27"><path d="M0.5 0V20.5L6.5 25.5H136.5V0" fill="#5f6366" stroke="#4b4f52" stroke-width="1"/></svg>
<span class="m" style="left:47px;top:834px;color:#d0d4d8;">Editor</span>
<svg style="left:139px;top:828px" width="137" height="27" viewBox="0 0 137 27"><path d="M0.5 0V20.5L6.5 25.5H136.5V0" fill="#5f6366" stroke="#4b4f52" stroke-width="1"/></svg>
<span class="m" style="left:176px;top:834px;color:#d0d4d8;">Food List</span>
<svg style="left:275px;top:828px" width="137" height="27" viewBox="0 0 137 27"><path d="M0.5 0V20.5L6.5 25.5H136.5V0" fill="#5f6366" stroke="#4b4f52" stroke-width="1"/></svg>
<span class="m" style="left:291px;top:834px;color:#d0d4d8;">Food Comparison</span>
<svg style="left:411px;top:828px" width="137" height="27" viewBox="0 0 137 27"><path d="M0.5 0V20.5L6.5 25.5H136.5V0" fill="#5f6366" stroke="#4b4f52" stroke-width="1"/></svg>
<span class="m" style="left:427px;top:834px;color:#d0d4d8;">Mix Comparison</span>
<svg style="left:547px;top:828px" width="137" height="27" viewBox="0 0 137 27"><path d="M0.5 0V20.5L6.5 25.5H136.5V0" fill="#5f6366" stroke="#4b4f52" stroke-width="1"/></svg>
<span class="m" style="left:563px;top:834px;color:#d0d4d8;">Nutrient Search</span>
<svg style="left:683px;top:828px" width="137" height="27" viewBox="0 0 137 27"><path d="M0.5 0V20.5L6.5 25.5H136.5V0" fill="#3a7dbe" stroke="#4b4f52" stroke-width="1"/></svg>
<span class="m" style="left:706px;top:834px;color:#d0d4d8;">Food Category</span>
<svg style="left:819px;top:828px" width="137" height="27" viewBox="0 0 137 27"><path d="M0.5 0V20.5L6.5 25.5H136.5V0" fill="#5f6366" stroke="#4b4f52" stroke-width="1"/></svg>
<span class="m" style="left:842px;top:834px;color:#d0d4d8;">Food Shopping</span>
<svg style="left:955px;top:828px" width="137" height="27" viewBox="0 0 137 27"><path d="M0.5 0V20.5L6.5 25.5H136.5V0" fill="#5f6366" stroke="#4b4f52" stroke-width="1"/></svg>
<span class="m" style="left:992px;top:834px;color:#d0d4d8;">Mixes Log</span>
<div style="left:2px;top:858px;width:1557px;height:1px;background:#4d5154;"></div>
<div style="left:644px;top:332px;width:266px;height:189px;background:#111111;"></div>
<div style="left:645px;top:333px;width:263px;height:186px;background:#5f6366;"></div>
<div style="left:645px;top:333px;width:263px;height:20px;background:;background:linear-gradient(#8a8a8a 0,#8a8a8a 1px,#5c5c5c 1px,#3f3f3f 9px,#1e1e1e 9px,#1e1e1e 17px,#0e0e0e 17px,#0e0e0e 20px)"></div>
<div style="left:645px;top:333px;width:1px;height:186px;background:#6f7376;"></div>
<div style="left:648px;top:335px;width:14px;height:14px;background:#c03a44;"></div>
<span class="ico" style="left:649px;top:340px;">Snack</span>
<span class="t" style="left:647px;top:335px;width:264px;text-align:center;color:#ffffff">Food Categories</span>
<div style="left:867px;top:343px;width:6px;height:2px;background:#f2f2f2;"></div>
<div style="left:882px;top:339px;width:6px;height:2px;background:#f2f2f2;"></div>
<div style="left:882px;top:341px;width:1px;height:4px;background:#f2f2f2;"></div>
<div style="left:887px;top:341px;width:1px;height:4px;background:#f2f2f2;"></div>
<div style="left:882px;top:344px;width:6px;height:1px;background:#f2f2f2;"></div>
<svg style="left:897px;top:339px" width="6" height="6" viewBox="0 0 6 6"><path d="M0 0h2v1h2V0h2v2H5v2h1v2H4V5H2v1H0V4h1V2H0z" fill="#f2f2f2"/></svg>
<div style="left:677px;top:368px;width:199px;height:99px;background:#4b4f52;"></div>
<div style="left:678px;top:369px;width:197px;height:18px;background:#5f6366;"></div>
<span class="m" style="left:748px;top:371px;color:#d0d4d8;">Category</span>
<div style="left:678px;top:387px;width:198px;height:80px;background:#3a3d40;"></div>
<div style="left:678px;top:403px;width:197px;height:1px;background:#6b6f72;"></div>
<span class="m" style="left:679px;top:388px;color:#d0d4d8;">Favorites</span>
<div style="left:678px;top:419px;width:197px;height:1px;background:#6b6f72;"></div>
<span class="m" style="left:679px;top:404px;color:#d0d4d8;">Leafy Greens</span>
<div style="left:874px;top:388px;width:1px;height:32px;background:#6b6f72;"></div>
<div style="left:759px;top:482px;width:35px;height:24px;background:#4b4f52;"></div>
<div style="left:761px;top:484px;width:31px;height:20px;background:#5f6366;"></div>
<div style="left:769px;top:486px;width:14px;height:15px;border:1px solid #3a7dbe"></div>
<span class="m" style="left:770px;top:487px;color:#d0d4d8;">OK</span>
</div></body></html>
